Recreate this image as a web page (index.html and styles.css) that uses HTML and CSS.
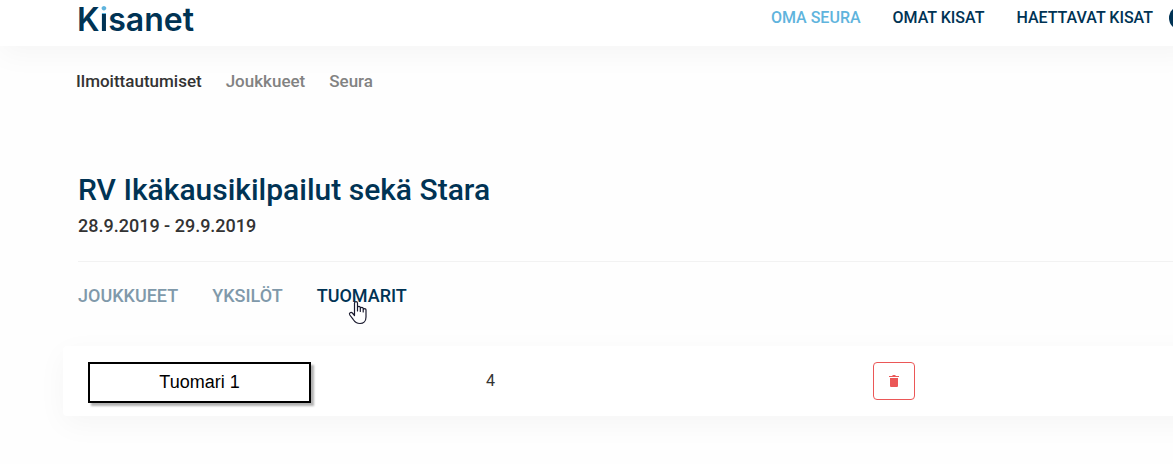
FILE: index.html
```html
<!DOCTYPE html>
<html lang="fi">
<head>
    <meta charset="UTF-8">
    <meta name="viewport" content="width=device-width, initial-scale=1.0">
    <title>Kisanet</title>
    <link rel="stylesheet" href="styles.css">
</head>
<body>
    <header class="navbar">
        <a href="#" class="logo">K<span class="logo-i">i</span>sanet</a>
        <nav class="main-nav">
            <a href="#" class="active">OMA SEURA</a>
            <a href="#">OMAT KISAT</a>
            <a href="#">HAETTAVAT KISAT</a>
            <a href="#" class="profile" aria-label="Profiili"></a>
        </nav>
    </header>

    <nav class="sub-nav">
        <a href="#" class="active">Ilmoittautumiset</a>
        <a href="#">Joukkueet</a>
        <a href="#">Seura</a>
    </nav>

    <main class="content">
        <div class="event-header">
            <h1>RV Ikäkausikilpailut sekä Stara</h1>
            <p class="event-date">28.9.2019 - 29.9.2019</p>
        </div>

        <nav class="tabs">
            <a href="#">JOUKKUEET</a>
            <a href="#">YKSILÖT</a>
            <a href="#" class="active">TUOMARIT
                <svg class="pointer" width="20" height="25" viewBox="0 0 20 25" aria-hidden="true">
                    <path d="M6.5 15.5V3.2C6.5 1 9.5 1 9.5 3.2V11V7.8C9.5 6 12.3 6 12.3 7.8V11.5V8.6C12.3 7 15.2 7 15.2 8.6V12V9.7C15.2 8.3 18 8.3 18 9.7V17C18 21 15.5 23.5 12 23.5C8.5 23.5 6.8 22 5 19.2L1.8 15C0.6 13 3 11.6 4.4 13Z" fill="#fff" stroke="#1a1a2e" stroke-width="1.2" stroke-linejoin="round"/>
                </svg>
            </a>
        </nav>

        <table class="judges">
            <tbody>
                <tr>
                    <td><div class="judge-name">Tuomari 1</div></td>
                    <td class="judge-level">4</td>
                    <td>
                        <button type="button" class="btn-delete" aria-label="Poista">
                            <svg width="10" height="12" viewBox="0 0 10 12" aria-hidden="true">
                                <path d="M0 1H3L4 0H6L7 1H10V2H0ZM1 3H9V11Q9 12 8 12H2Q1 12 1 11Z" fill="#eb5757"/>
                            </svg>
                        </button>
                    </td>
                </tr>
            </tbody>
        </table>
    </main>
</body>
</html>
```

FILE: styles.css
```css
body {
    font-family: Roboto, "Liberation Sans", sans-serif;
    font-size: 16px;
    line-height: 24px;
    margin: 0;
    background-color: #fefefe;
    color: #333;
    overflow: hidden;
}

a {
    color: inherit;
    text-decoration: none;
}

/* Top bar */
.navbar {
    display: flex;
    justify-content: space-between;
    align-items: center;
    height: 46px;
    padding-left: 77px;
    margin-right: -20px;
    background: #fff;
    box-shadow: 0 8px 30px rgba(0, 0, 0, 0.04);
}

.logo {
    padding-bottom: 6px;
    font-family: Inter, sans-serif;
    font-size: 32px;
    font-weight: 600;
    line-height: 40px;
    color: #003354;
}

.logo-i {
    background: linear-gradient(#5fb4dd 14px, #003354 14px);
    background-clip: text;
    -webkit-background-clip: text;
    color: transparent;
}

.main-nav {
    display: flex;
    align-items: center;
    gap: 32px;
    padding-bottom: 10px;
    font-weight: 500;
    color: #003354;
}

.main-nav .active {
    color: #5fb4dd;
}

.main-nav .profile {
    width: 24px;
    height: 24px;
    margin-left: -16px;
    border-radius: 50%;
    background: #003354;
}

.sub-nav {
    display: flex;
    gap: 24px;
    padding: 23px 76px 0;
    font-size: 17px;
    font-weight: 500;
    color: #828282;
}

.sub-nav .active {
    color: #333;
}

/* Event */
.content {
    padding: 76px 0 48px 78px;
}

.event-header {
    padding-bottom: 23px;
    border-bottom: 1px solid #f2f2f2;
}

h1 {
    margin: 0;
    font-size: 30px;
    font-weight: 500;
    line-height: 42px;
    color: #003354;
}

.event-date {
    margin: 3px 0 0;
    font-size: 18px;
    font-weight: 500;
}

.tabs {
    display: flex;
    gap: 34px;
    padding: 22px 0 38px;
    font-size: 18px;
    font-weight: 500;
    color: #8099aa;
}

.tabs .active {
    position: relative;
    color: #003354;
}

.pointer {
    position: absolute;
    left: 31px;
    top: 16px;
}

/* Judge list, runs past the right edge */
.judges {
    table-layout: fixed;
    width: calc(100% + 78px);
    margin-left: -15px;
    border-spacing: 0;
    border-radius: 4px;
    background: #fff;
    box-shadow: 0 8px 30px rgba(0, 0, 0, 0.04);
}

.judges td {
    width: 33%;
    padding: 16px 25px 13px;
    vertical-align: top;
}

.judges td:first-child {
    width: 34%;
}

.judges .judge-level {
    line-height: 38px;
}

.judge-name {
    width: 219px;
    border: 2px solid #000;
    background: #fff;
    box-shadow: 3px 3px 2px rgba(0, 0, 0, 0.3);
    font-family: "Liberation Sans", sans-serif;
    font-size: 18px;
    line-height: 37px;
    text-align: center;
    color: #000;
}

.btn-delete {
    display: flex;
    align-items: center;
    justify-content: center;
    width: 42px;
    height: 38px;
    padding: 0;
    border: 1px solid #eb5757;
    border-radius: 4px;
    background: #fff;
}
```
